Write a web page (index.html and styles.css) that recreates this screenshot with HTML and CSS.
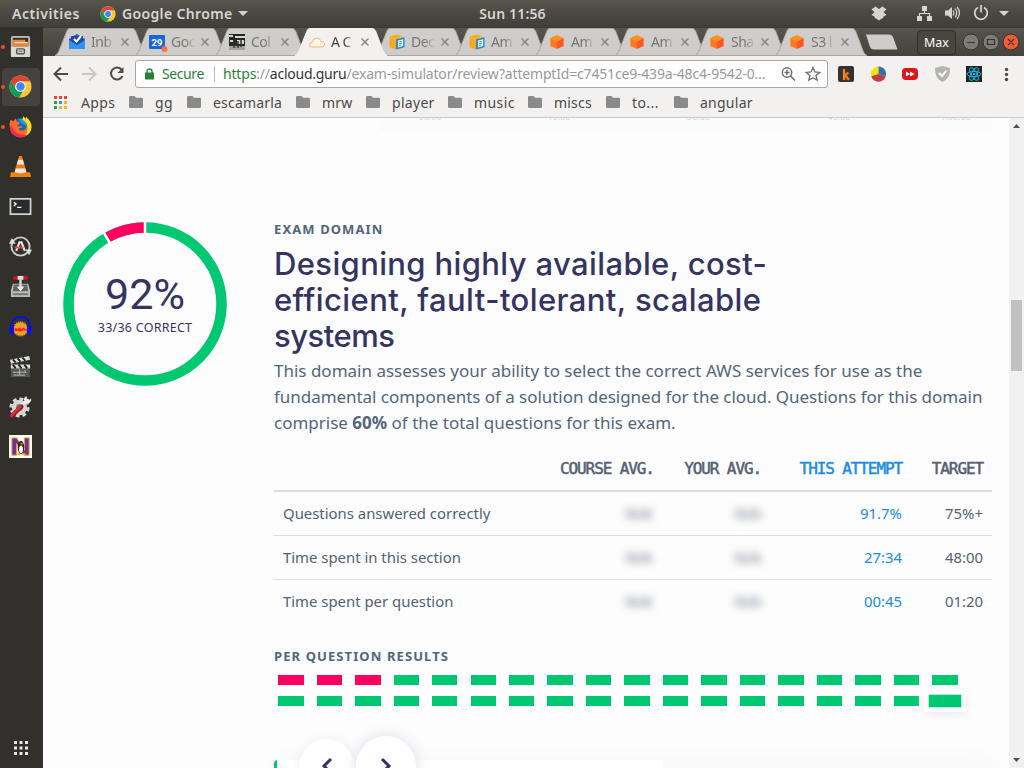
FILE: index.html
```html
<!DOCTYPE html>
<html lang="en">
<head>
<meta charset="utf-8">
<title>A Cloud Guru</title>
<link rel="stylesheet" href="styles.css">
</head>
<body>
<svg width="0" height="0" class="defs">
  <symbol id="chrome" viewBox="0 0 24 24"><circle cx="12" cy="12" r="11.5" fill="#fbc73b"/><path d="M2 6.300A11.500 11.500 0 0 1 22 6.500H12A5.500 5.500 0 0 0 7.200 14.700Z" fill="#dc4437"/><path d="M2 6.300L7.200 14.700A5.500 5.500 0 0 0 14.500 16.900L10.500 23.400A11.500 11.500 0 0 1 2 6.300Z" fill="#109d58"/><circle cx="12" cy="12" r="5.500" fill="#f5f5f5"/><circle cx="12" cy="12" r="4.400" fill="#4285f4"/></symbol>
  <symbol id="tabshape" viewBox="0 0 92 28"><path d="M0 27.500C3 26 4 23 5.500 19L11.500 4C12.500 1.500 13 .5 15 .5H77C79 .5 79.800 1.500 81 4L87 20C88.500 24 89 26 92 27.500Z"/></symbol>
  <symbol id="folder" viewBox="0 0 14 12"><path d="M1.200 0H5.500L7 1.700H12.800Q14 1.700 14 3V10.800Q14 12 12.800 12H1.200Q0 12 0 10.800V1.200Q0 0 1.200 0Z" fill="#8a8a8a"/></symbol>
  <symbol id="cube" viewBox="0 0 16 18"><path d="M8 1L15.500 4.500L8 8.500L.5 4.500Z" fill="#ff9021"/><path d="M.5 4.500L8 8.500V17L.5 13.500Z" fill="#ff7a1c"/><path d="M15.500 4.500L8 8.500V17L15.500 13.500Z" fill="#ff551f"/></symbol>
  <symbol id="docs" viewBox="0 0 17 17"><path d="M.5 3L8 .5L14 2.500V14L7 16.500L.5 14Z" fill="#f9a825"/><path d="M.5 3L7 5.500L14 2.500" fill="none" stroke="#fcc04a"/><path d="M7.500 5.500L16.500 3.500V14L7.500 16.500Z" fill="#1d8fc7"/><path d="M9.500 6.800L15 5.500V12.800L9.500 14.300Z" fill="#fff"/><path d="M10.500 8.500L14 7.700M10.500 10.500L14 9.700M10.500 12.500L13 12" stroke="#1d8fc7"/></symbol>
  <symbol id="x" viewBox="0 0 8 8"><path d="M.5 .5L7.500 7.500M7.500 .5L.5 7.500" stroke="#8b8a88" stroke-width="1.500"/></symbol>
</svg>
<header class="topbar">
  <span class="activities">Activities</span>
  <svg class="appicon"><use href="#chrome"/></svg>
  <span class="appname">Google Chrome</span>
  <svg class="caret" viewBox="0 0 10 5"><path d="M0 0H10L5 5Z" fill="#d3d1cd"/></svg>
  <span class="clock">Sun 11:56</span>
  <svg class="status" viewBox="0 0 150 27" fill="#d8d5d0"><path d="M5.500 9.500L9.500 6.500L13 9L16.500 6.500L20.500 9.500L17.500 12L20.500 15L17.500 16.500V17.500L13 20.500L8.500 17.500V16.500L5.500 15L8.500 12Z"/><path d="M56 6h5v5h-5zM51 16h5v5h-5zM61 16h5v5h-5z"/><path d="M58.500 11V13.500M53.500 16V13.500H63.500V16" fill="none" stroke="#d8d5d0" stroke-width="1.200"/><path d="M79 10.500H82L86 7V19L82 15.500H79Z"/><path d="M87 10.500Q89 13 87 15.500M89 8.500Q92.500 13 89 17.500M91 7Q96 13 91 19" fill="none" stroke="#d8d5d0" stroke-width="1.200"/><path d="M112 7.500A6.300 6.300 0 1 0 118 7.500M115 5V12.500" fill="none" stroke="#d8d5d0" stroke-width="1.700"/><path d="M133 11H143L138 16Z"/></svg>
</header>
<div class="desk">
<nav class="dock">
  <div class="app run"><svg viewBox="0 0 24 24"><rect x="2" y="1" width="20" height="22" rx="2" fill="#b9b9b6"/><rect x="4" y="3" width="16" height="10" fill="#3a2b20"/><path d="M4 5h13v2h3v5H4Z" fill="#f08436"/><path d="M6 8h13" stroke="#fff"/><rect x="2" y="12" width="20" height="11" rx="1" fill="#d8d8d5"/><rect x="8" y="14.500" width="8" height="5" rx="1" fill="none" stroke="#555" stroke-width="1.500"/><path d="M10 17h4" stroke="#555"/></svg></div>
  <div class="app run active"><svg viewBox="0 0 24 24"><use href="#chrome"/></svg></div>
  <div class="app run"><svg viewBox="0 0 24 24"><circle cx="12" cy="12.500" r="9.500" fill="#1669b8"/><path d="M10 4Q15 3 18 7V12L13 8Z" fill="#1c9be0"/><path d="M1.500 5L4.500 6.500L7 3.500L8 7Q12 6 11 9L8.500 11Q10 12.500 13 11.500L14 13Q11 14 10 13.500Q11 17.500 15.500 16Q19 14 18.500 9Q23 12 22 17A11 10.500 0 0 1 1 14Q0 9 1.500 5Z" fill="#ff6a24"/><path d="M15 1L17 4L18 2Q24 7 23.500 13Q23 19 17 22Q20 18 19 11Q18 7 14 5Z" fill="#ffdb28"/><path d="M.7 11Q1 22 12 23.500Q16 23.500 19 21Q7 22 3.500 13Z" fill="#f4245c"/></svg></div>
  <div class="app"><svg viewBox="0 0 24 24"><path d="M2 18H22L23 23H1Z" fill="#f28500"/><path d="M10.500 1H13.500L19 20Q12 23 5 20Z" fill="#f07d13"/><path d="M9.600 5H14.400L15.900 10H8.100ZM7 14H17L18 18Q12 20 6 18Z" fill="#e7e7e7"/></svg></div>
  <div class="app"><svg viewBox="0 0 24 24"><rect x="1.500" y="4" width="21" height="16" fill="#282c2e" stroke="#d5d6d3" stroke-width="1.800"/><path d="M5 7.500L7.500 9.500L5 11.500M8.500 13H13" stroke="#fff" stroke-width="1.300" fill="none"/></svg></div>
  <div class="app"><svg viewBox="0 0 24 24" fill="none"><circle cx="12" cy="12" r="9.500" stroke="#ccccca" stroke-width="2"/><path d="M0 9L3 3L7 9ZM24 15L21 21L17 15Z" fill="#ddd"/><path d="M7.500 16.500L11 7.500H13L16.500 16.500" stroke="#eee" stroke-width="2.200"/><path d="M6 13H15" stroke="#e95420" stroke-width="2"/></svg></div>
  <div class="app"><svg viewBox="0 0 24 24"><path d="M4 9H20L22 16V23H2V16Z" fill="#b9bbb8"/><path d="M5 10H19L20 17H4Z" fill="#62665f"/><path d="M4 20H20" stroke="#777" stroke-width="2"/><path d="M12 3V15" stroke="#ddd" stroke-width="2.500"/><path d="M8 12H16L12 17Z" fill="#eee"/><rect x="4" y="1" width="16" height="4" rx="2" fill="#c9151f"/><rect x="9" y="1" width="6" height="4" fill="#ddd"/></svg></div>
  <div class="app"><svg viewBox="0 0 24 24"><circle cx="12" cy="14.500" r="7" fill="#e9a02b" stroke="#e9a02b" stroke-width="2" stroke-dasharray="1 1"/><path d="M5 15L7 13.500L9 14.500L11 13L13 14.500L15 13L17 14.500L19 14V16L17 16.500L15 16L12 17.500L9 16.500L7 17Z" fill="#f22"/><path d="M3 14Q2 2 12 2Q22 2 21 14" fill="none" stroke="#0712d8" stroke-width="2"/><path d="M5 10Q0 11 0 16Q0 20 5 21ZM19 10Q24 11 24 16Q24 20 19 21Z" fill="#0910e7"/></svg></div>
  <div class="app"><svg viewBox="0 0 24 24"><rect x="2" y="10" width="20" height="13" fill="#555753"/><path d="M1 5L21 1L22 5L2 9Z" fill="#ddd"/><path d="M4 4.500L7 8M9 3.500L12 7M14 2.500L17 6" stroke="#222" stroke-width="2"/><path d="M2 10H22V14H2Z" fill="#ddd"/><path d="M4 10L7 14M10 10L13 14M16 10L19 14" stroke="#222" stroke-width="2"/><path d="M4 18H18L16 16M5 21H17M11 15V21" stroke="#bbb" fill="none"/></svg></div>
  <div class="app"><svg viewBox="0 0 24 24"><circle cx="11" cy="13" r="8" fill="#d6d7d4"/><circle cx="11" cy="13" r="9" fill="none" stroke="#d6d7d4" stroke-width="3" stroke-dasharray="4 3"/><circle cx="11" cy="13" r="3.500" fill="#77736c"/><path d="M12 12L19 5" stroke="#eee" stroke-width="3"/><path d="M15 4L18 1L19 4L22 5L23 3Q24 8 19 9Z" fill="#eee"/><path d="M2.500 22L13 12" stroke="#8f161b" stroke-width="4.500" stroke-linecap="round"/><path d="M2.500 21.500L12 12" stroke="#d8343b" stroke-width="2.800" stroke-linecap="round"/></svg></div>
  <div class="app"><svg viewBox="0 0 24 24"><rect width="24" height="24" fill="#fffbed"/><path d="M3 21V3H8L16 16V3H21V21H16L8 9V21Z" fill="#713294" stroke="#e8a33b"/><ellipse cx="12.500" cy="13" rx="3.300" ry="7" fill="#222"/><ellipse cx="12.500" cy="15" rx="2" ry="4" fill="#fff"/><path d="M9 20H12M14 20H17M12 9h2" stroke="#f6a81f" stroke-width="2"/></svg></div>
  <svg class="grid" viewBox="0 0 14 14" fill="#e8e8e6"><path d="M0 0h3v3H0zM5.500 0h3v3h-3zM11 0h3v3h-3zM0 5.500h3v3H0zM5.500 5.500h3v3h-3zM11 5.500h3v3h-3zM0 11h3v3H0zM5.500 11h3v3h-3zM11 11h3v3h-3z"/></svg>
</nav>
<main class="window">
  <div class="tabs">
    <div class="tab"><svg class="shape"><use href="#tabshape"/></svg><svg class="fav" viewBox="0 0 16 16"><path d="M0 5L8 0L16 5V15H0Z" fill="#2a56c6"/><path d="M2 2H14V11H2Z" fill="#1c47af"/><path d="M5 5L7.500 7.500L12 2" fill="none" stroke="#fff" stroke-width="2"/><path d="M0 6L8 11L16 6V15H0Z" fill="#2f92f0"/></svg><span>Inb</span><svg class="close"><use href="#x"/></svg></div>
    <div class="tab"><svg class="shape"><use href="#tabshape"/></svg><svg class="fav" viewBox="0 0 16 16"><rect y="1" width="16" height="14" rx="1" fill="#1b66d2"/><text x="2.500" y="12" class="cal">29</text><circle cx="15.500" cy="15" r="3" fill="#ff7043"/></svg><span>Goo</span><svg class="close"><use href="#x"/></svg></div>
    <div class="tab"><svg class="shape"><use href="#tabshape"/></svg><svg class="fav" viewBox="0 0 16 16"><rect width="16" height="16" fill="#252624"/><path d="M0 12H16V16H0Z" fill="#a4a39e"/><path d="M6 2H16V4H6ZM0 1H4V3H0ZM8 6H15V10H8ZM1 6H4V8H1Z" fill="#d6d5cf"/><path d="M5 6V14M9 7V14M12 5V13" stroke="#30342f" stroke-width="1.500"/></svg><span>Col</span><svg class="close"><use href="#x"/></svg></div>
    <div class="tab current"><svg class="shape"><use href="#tabshape"/></svg><svg class="fav" viewBox="0 0 16 16"><path d="M3 13Q0 13 .5 10.500Q1 8 3.500 8Q4 4 8 4Q11 4 12 7.500Q16 8 15.500 11Q15 13 12 13Z" fill="#fff3ea" stroke="#ffae7f"/></svg><span>A C</span><svg class="close"><use href="#x"/></svg></div>
    <div class="tab"><svg class="shape"><use href="#tabshape"/></svg><svg class="fav"><use href="#docs"/></svg><span>Dec</span><svg class="close"><use href="#x"/></svg></div>
    <div class="tab"><svg class="shape"><use href="#tabshape"/></svg><svg class="fav"><use href="#docs"/></svg><span>Am</span><svg class="close"><use href="#x"/></svg></div>
    <div class="tab"><svg class="shape"><use href="#tabshape"/></svg><svg class="fav"><use href="#cube"/></svg><span>Am</span><svg class="close"><use href="#x"/></svg></div>
    <div class="tab"><svg class="shape"><use href="#tabshape"/></svg><svg class="fav"><use href="#cube"/></svg><span>Am</span><svg class="close"><use href="#x"/></svg></div>
    <div class="tab"><svg class="shape"><use href="#tabshape"/></svg><svg class="fav"><use href="#cube"/></svg><span>Sha</span><svg class="close"><use href="#x"/></svg></div>
    <div class="tab"><svg class="shape"><use href="#tabshape"/></svg><svg class="fav"><use href="#cube"/></svg><span>S3 l</span><svg class="close"><use href="#x"/></svg></div>
    <svg class="newtab" viewBox="0 0 34 16"><path d="M1 .5H24Q27 .5 28 3L32.500 15.500H9Q6 15.500 5 13Z" fill="#cfcdcb"/></svg>
    <div class="profile">Max</div>
    <svg class="winbtns" viewBox="0 0 58 18"><g stroke="#353430"><circle cx="9" cy="9" r="8" fill="#7c7b75"/><circle cx="29" cy="9" r="8" fill="#7c7b75"/><circle cx="49" cy="9" r="8" fill="#f05a35"/></g><path d="M5 9.500H13M25.500 6.500H32.500V11.500H25.500ZM46 6L52 12M52 6L46 12" fill="none" stroke="#35342f" stroke-width="1.200"/></svg>
  </div>
  <div class="toolbar">
    <svg class="nav" viewBox="0 0 80 20" fill="none" stroke-width="2"><path d="M17 10H4M10 3.500L3.500 10L10 16.500" stroke="#4d4d4d"/><path d="M31 10H44M38 3.500L44.500 10L38 16.500" stroke="#c8c7c5"/><path d="M70.500 5.500A6 6 0 1 0 71.500 12" stroke="#4d4d4d"/><path d="M72.500 3V9H66.500Z" fill="#4d4d4d"/></svg>
    <div class="omnibox">
      <svg class="lock" viewBox="0 0 9 12"><path d="M0 4.500H9V11.500H0Z" fill="#2a8137"/><path d="M2 5V3.500Q2 1 4.500 1Q7 1 7 3.500V5" fill="none" stroke="#2a8137" stroke-width="1.400"/></svg>
      <span class="secure">Secure</span><i class="sep"></i>
      <span class="url"><b>https</b>://<em>acloud.guru</em><span class="path">/exam-simulator/review?attemptId=c7451ce9-439a-48c4-9542-0…</span></span>
      <svg class="boxicons" viewBox="0 0 40 16" fill="none" stroke="#6b6b6b" stroke-width="1.500"><circle cx="6" cy="6.500" r="4.700"/><path d="M9.500 10L14 14.500M3.500 6.500H8.500M6 4V9"/><path d="M32 1.500L33.900 6L38.700 6.400L35 9.500L36.200 14.200L32 11.700L27.800 14.200L29 9.500L25.300 6.400L30.100 6Z" stroke-width="1.300"/></svg>
    </div>
    <svg class="exts" viewBox="0 0 180 20"><rect x="2" y="2" width="16" height="16" rx="2" fill="#333"/><path d="M8 5V16M8 12L12.500 8.500M9 11L13 16" fill="none" stroke="#ff8208" stroke-width="2.200"/><path d="M42.500 10V2.500A7.500 7.500 0 0 0 35.300 12.300Z" fill="#f8e100"/><path d="M42.500 10V2.500A7.500 7.500 0 0 1 49.700 12.300Z" fill="#3271a9"/><path d="M42.500 10L35.300 12.300A7.500 7.500 0 0 0 49.700 12.300Z" fill="#bf3e3e"/><rect x="66" y="4" width="16" height="12" rx="4" fill="#dc1620"/><path d="M70 7.500L74 10L70 12.500ZM74 7.500L78.500 10L74 12.500Z" fill="#fff"/><path d="M99 4L106.500 2L114 4Q114.500 14 106.500 18Q98.500 14 99 4Z" fill="#b3b3b3"/><path d="M103 9L106 12L110.500 6.500" fill="none" stroke="#fff" stroke-width="2"/><rect x="130" y="2" width="16" height="16" fill="#222"/><g fill="none" stroke="#1bb8df"><ellipse cx="138" cy="10" rx="7" ry="2.700"/><ellipse cx="138" cy="10" rx="7" ry="2.700" transform="rotate(60 138 10)"/><ellipse cx="138" cy="10" rx="7" ry="2.700" transform="rotate(120 138 10)"/></g><circle cx="138" cy="10" r="1.300" fill="#1bb8df"/><g fill="#4b4b4b"><circle cx="170.500" cy="5.500" r="1.700"/><circle cx="170.500" cy="10.500" r="1.700"/><circle cx="170.500" cy="15.500" r="1.700"/></g></svg>
  </div>
  <div class="bookmarks">
    <svg class="apps" viewBox="0 0 13 13"><path d="M0 0h3v3H0zM5 0h3v3H5zM10 0h3v3h-3z" fill="#ee4036"/><path d="M0 5h3v3H0zM0 10h3v3H0z" fill="#28a04c"/><path d="M5 5h3v3H5z" fill="#4285f4"/><path d="M10 5h3v3h-3zM5 10h3v3H5zM10 10h3v3h-3z" fill="#fbb324"/></svg>
    <span class="w-apps">Apps</span>
    <svg class="f"><use href="#folder"/></svg><span class="w-gg">gg</span>
    <svg class="f"><use href="#folder"/></svg><span class="w-esc">escamarla</span>
    <svg class="f"><use href="#folder"/></svg><span class="w-mrw">mrw</span>
    <svg class="f"><use href="#folder"/></svg><span class="w-player">player</span>
    <svg class="f"><use href="#folder"/></svg><span class="w-music">music</span>
    <svg class="f"><use href="#folder"/></svg><span class="w-miscs">miscs</span>
    <svg class="f"><use href="#folder"/></svg><span class="w-to">to...</span>
    <svg class="f"><use href="#folder"/></svg><span class="w-angular">angular</span>
  </div>
  <div class="viewport">
    <article class="page">
      <div class="axis"><span>00:00</span><span>15:00</span><span>30:00</span><span>45:00</span><span>1:00:00</span></div>
      <section class="domain">
        <div class="score">
          <svg viewBox="0 0 164 164" fill="none" stroke-width="10.500"><circle cx="82" cy="82" r="76.500" stroke="#00c771"/><path d="M43.750 15.750A76.500 76.500 0 0 1 82 5.500" stroke="#ff0061"/><path d="M82 -1V12M37.900 5.600L47.400 22" stroke="#fff" stroke-width="2.500"/></svg>
          <div class="scoretext"><strong>92%</strong><small>33/36 CORRECT</small></div>
        </div>
        <div class="detail">
          <h4>EXAM DOMAIN</h4>
          <h2><span class="h1">Designing highly available, cost-</span><br><span class="h2">efficient, fault-tolerant, scalable</span><br><span class="h3">systems</span></h2>
          <p><span class="p1">This domain assesses your ability to select the correct AWS services for use as the</span><br><span class="p2">fundamental components of a solution designed for the cloud. Questions for this domain</span><br><span class="p3">comprise <b>60%</b> of the total questions for this exam.</span></p>
          <div class="table">
            <div class="row head"><span></span><span>COURSE AVG.</span><span>YOUR AVG.</span><span class="blue">THIS ATTEMPT</span><span>TARGET</span></div>
            <div class="row"><span>Questions answered correctly</span><span class="blur">N/A</span><span class="blur">N/A</span><span class="blue">91.7%</span><span>75%+</span></div>
            <div class="row"><span>Time spent in this section</span><span class="blur">N/A</span><span class="blur">N/A</span><span class="blue">27:34</span><span>48:00</span></div>
            <div class="row"><span>Time spent per question</span><span class="blur">N/A</span><span class="blur">N/A</span><span class="blue">00:45</span><span>01:20</span></div>
          </div>
          <h4 class="per">PER QUESTION RESULTS</h4>
          <div class="results">
            <i class="bad"></i><i class="bad"></i><i class="bad"></i><i></i><i></i><i></i><i></i><i></i><i></i><i></i><i></i><i></i><i></i><i></i><i></i><i></i><i></i><i></i>
            <i></i><i></i><i></i><i></i><i></i><i></i><i></i><i></i><i></i><i></i><i></i><i></i><i></i><i></i><i></i><i></i><i></i><i class="selected"></i>
          </div>
          <div class="card"><div class="answer"></div>
            <div class="pager"><button class="prev"><svg viewBox="0 0 12 18"><path d="M10 2L3 9L10 16"/></svg></button><button class="next"><svg viewBox="0 0 12 18"><path d="M2 2L9 9L2 16"/></svg></button></div>
          </div>
        </div>
      </section>
    </article>
    <div class="scrollbar"><svg viewBox="0 0 7 4"><path d="M0 4L3.500 0L7 4Z" fill="#505050"/></svg><i></i><svg viewBox="0 0 7 4"><path d="M0 0H7L3.500 4Z" fill="#505050"/></svg></div>
  </div>
</main>
</div>
</body>
</html>
```
FILE: styles.css
```css
* { box-sizing: border-box; }
body { margin: 0; width: 1024px; height: 768px; overflow: hidden; font-family: "Noto Sans", "Open Sans", sans-serif; display: flex; flex-direction: column; }
svg { display: block; flex: none; overflow: visible; }
span { white-space: nowrap; }
.defs { position: absolute; }
.topbar { height: 27px; flex: none; display: flex; align-items: center; position: relative; background: linear-gradient(#57544b, #3f3e39); color: #d8d6d1; font-size: 14px; font-weight: 600; }
.activities { width: 88px; padding-left: 12px; letter-spacing: .55px; }
.appicon { width: 16px; height: 16px; margin: 0 6px 0 12px; }
.appname { width: 116px; letter-spacing: .35px; }
.caret { width: 10px; height: 5px; }
.clock { position: absolute; left: 0; width: 1025px; text-align: center; letter-spacing: .15px; margin-top: -1px; }
.status { width: 150px; height: 27px; margin-left: auto; margin-right: 8px; }
.desk { flex: 1; display: flex; min-height: 0; }
.dock { width: 43px; flex: none; background: #32302c; display: flex; flex-direction: column; align-items: center; position: relative; }
.app { width: 38px; height: 40px; display: flex; align-items: center; justify-content: center; position: relative; flex: none; margin-left: -1px; border-radius: 4px; padding: 0 1px 1px 0; }
.app svg { width: 23px; height: 23px; }
.app.active { background: #45433f; height: 38px; margin-top: 1px; margin-bottom: 1px; }
.app.run::before { content: ""; position: absolute; left: -1px; top: 50%; width: 4px; height: 4px; margin-top: -2px; border-radius: 50%; background: #e95420; }
.grid { width: 14px; height: 14px; margin-top: auto; margin-bottom: 13px; margin-right: 2px; }
.window { flex: 1; min-width: 0; display: flex; flex-direction: column; background: #f2f1ef; }
.tabs { height: 29px; display: flex; align-items: center; background: linear-gradient(#57544b, #43423c); padding-left: 12px; border-top: 1px solid #3c3b37; color: #777; }
.tab { width: 80px; height: 28px; flex: none; display: flex; align-items: center; padding-left: 14px; position: relative; font-size: 14px; }
.tab > * { position: relative; z-index: 2; }
.tab .shape { position: absolute; left: 0; top: 0; width: 92px; height: 28px; fill: #cfcdcb; stroke: #aaa8a5; z-index: 0; }
.tab.current { color: #444; z-index: 3; }
.tab.current .shape { fill: #f2f1ef; stroke: #f2f1ef; }
.fav { width: 16px; height: 16px; }
.tab span { width: 23px; overflow: hidden; margin-left: 6px; margin-top: -1px; letter-spacing: -.5px; -webkit-mask-image: linear-gradient(90deg, #000 60%, rgba(0,0,0,.1)); }
.close { width: 8px; height: 8px; margin-left: 7px; }
.cal { font: bold 9.500px Roboto; fill: #fff; }
.newtab { width: 34px; height: 16px; margin-left: 10px; z-index: 2; }
.profile { width: 39px; height: 25px; margin-left: 18px; border: 1px solid #2f2e2a; border-radius: 4px; background: #48463f; color: #fff; font-size: 12.500px; line-height: 23px; text-align: center; }
.winbtns { width: 58px; height: 18px; margin-left: 6px; }
.toolbar { height: 36px; display: flex; align-items: center; }
.nav { width: 80px; height: 20px; margin-left: 8px; }
.omnibox { width: 693px; height: 28px; margin-left: 4px; border: 1px solid #a9a8a6; border-radius: 3px; background: #fff; display: flex; align-items: center; font-size: 14px; padding-left: 9px; }
.omnibox span { position: relative; top: -.5px; }
.lock { width: 9px; height: 12px; }
.secure { margin-left: 8px; width: 45px; color: #2a8137; letter-spacing: -.4px; }
.sep { width: 1px; height: 16px; background: #bbb; margin: 0 8px 0 7px; }
.url { width: 546px; letter-spacing: -.18px; color: #999; }
.url b { color: #2a8137; font-weight: 400; }
.url em { color: #333; font-style: normal; letter-spacing: -.25px; }
.boxicons { width: 40px; height: 16px; margin-left: 12px; }
.exts { width: 180px; height: 20px; margin-left: 8px; }
.bookmarks { height: 26px; border-bottom: 1px solid #cbcac8; display: flex; align-items: center; font-size: 14px; color: #4a4a4a; padding: 0 0 5px 11px; }
.apps { width: 13px; height: 13px; margin-right: 14px; }
.f { width: 14px; height: 12px; margin-right: 12px; }
.w-apps { width: 48px; letter-spacing: .4px; } .w-gg { width: 32px; letter-spacing: .3px; } .w-esc { width: 83px; letter-spacing: .2px; } .w-mrw { width: 44px; letter-spacing: .2px; } .w-player { width: 56px; letter-spacing: .3px; } .w-music { width: 54px; letter-spacing: .4px; } .w-miscs { width: 52px; letter-spacing: .2px; } .w-to { width: 42px; letter-spacing: .4px; } .w-angular { letter-spacing: .25px; }
.viewport { flex: 1; display: flex; min-height: 0; overflow: hidden; background: #fdfdfd; }
.page { flex: 1; min-width: 0; }
.axis { height: 13px; margin-left: 337px; width: 612px; background: #fafbfd; overflow: hidden; display: grid; grid-template-columns: 100px 158px 121px 160px 73px; color: #bbb; font-size: 9px; line-height: 13px; text-align: center; }
.axis span { margin-top: -8px; filter: blur(.5px); opacity: .6; }
.domain { display: flex; }
.score { width: 164px; height: 164px; margin: 91px 47px 0 20px; flex: none; display: grid; color: #353460; }
.score > * { grid-area: 1 / 1; }
.scoretext { display: flex; flex-direction: column; align-items: center; padding-top: 47px; }
.scoretext strong { font: 400 43px/50px Roboto; letter-spacing: 0; }
.scoretext small { font-size: 12.500px; line-height: 18px; letter-spacing: .25px; }
.detail { width: 718px; padding-top: 89px; color: #53657a; }
h4 { margin: 0; font-size: 13px; line-height: 19px; font-weight: 700; letter-spacing: 1.100px; color: #53657a; }
h2 { margin: 7px 0 0; font: 500 31px/36px Inter; color: #353460; }
.h1 { letter-spacing: .37px; }
.h2 { letter-spacing: .41px; }
.h3 { letter-spacing: -.5px; }
p { margin: 4px 0 0; font-size: 17px; line-height: 26px; }
.p2 { letter-spacing: -.04px; }
.table { margin-top: 9px; }
.row { height: 44px; display: grid; grid-template-columns: 277px 110px 109px 141px 81px; align-items: center; font-size: 14.900px; border-bottom: 1px solid #dcdcdc; color: #526173; padding-bottom: 2px; }
.row:last-child { border: 0; }
.row span { padding: 0 9px; text-align: right; }
.row span:first-child { text-align: left; }
.row.head { height: 47px; border-bottom-width: 2px; padding: 1px 0 0; font-family: "DejaVu Sans Mono"; font-size: 16px; letter-spacing: -1.100px; -webkit-text-stroke: .5px; }
.row .blue { color: #208be2; }
.blur { filter: blur(4px); }
.per { margin-top: 23px; }
.results { margin-top: 9px; width: 692.500px; display: grid; grid-template-columns: repeat(18, 1fr); row-gap: 11px; }
.results i { height: 10px; width: 25.400px; margin-left: 4.200px; background: #00c771; }
.results .bad { background: #ff0061; }
.results .selected { box-shadow: 0 0 0 3.300px #00c771, 0 0 0 8px #fff, 0 3px 10px 7px #e8e8ee; height: 6px; margin-top: 2px; }
.card { margin-top: 54px; height: 100px; border-left: 3px solid #00c771; border-radius: 4px; background: #f9fafc; position: relative; box-shadow: 0 0 20px #f6f6fa; }
.answer { width: 386px; height: 100px; background: #fff; }
.pager { position: absolute; left: 22px; top: -24px; display: flex; gap: 2px; align-items: center; }
.pager button { width: 55px; height: 55px; border: 0; border-radius: 50%; background: #fff; box-shadow: 0 0 12px #eeeef3; padding: 0; display: flex; align-items: center; justify-content: center; }
.pager .next { width: 60px; height: 60px; box-shadow: 0 0 15px #dddde7; }
.pager svg { width: 12px; height: 18px; fill: none; stroke: #353460; stroke-width: 3; }
.scrollbar { width: 15px; flex: none; background: #f1f1f1; display: flex; flex-direction: column; align-items: center; position: relative; padding: 6px 0; }
.scrollbar svg { width: 7px; height: 4px; }
.scrollbar i { width: 11px; height: 71px; background: #c1c1c1; margin: 172px 0 auto; }
```
